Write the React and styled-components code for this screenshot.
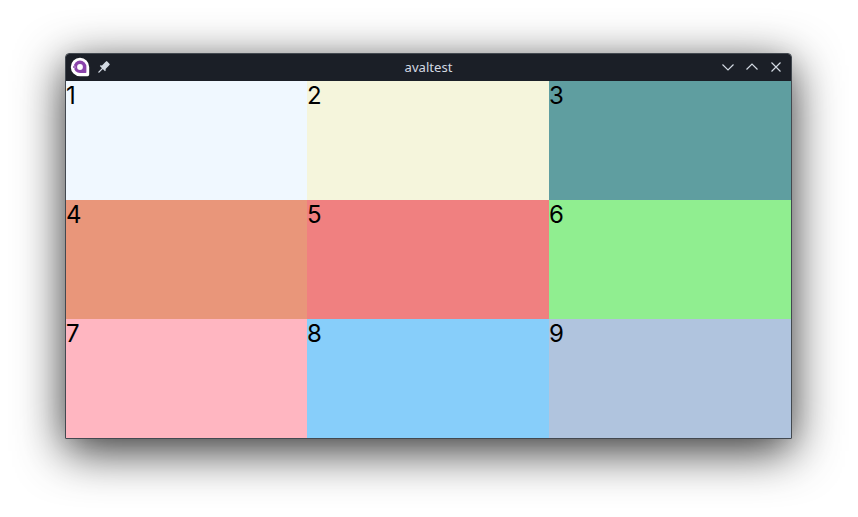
import React from "react";
import styled, { createGlobalStyle } from "styled-components";

const GlobalStyle = createGlobalStyle`
  * { box-sizing: border-box; }
  body { margin: 0; background: #fff; overflow: hidden; }
`;

const Desktop = styled.main`
  width: 858px;
  height: 517px;
  padding: 53px 66px 78px 65px;
`;

const Window = styled.section`
  display: flex;
  flex-direction: column;
  width: 727px;
  height: 386px;
  border: 1px solid #434950;
  border-radius: 4px 4px 0 0;
  box-shadow: 0 12px 48px rgba(0, 0, 0, 0.8), 0 4px 24px rgba(0, 0, 0, 0.05);
`;

const TitleBar = styled.header`
  display: grid;
  grid-template-columns: 72px 1fr 72px;
  align-items: start;
  height: 27px;
  padding: 0 3px 0 4px;
  background: #1b1f27;
  border-radius: 3px 3px 0 0;
`;

const Group = styled.div`
  display: flex;
  align-items: center;
  height: 26px;
`;

const Title = styled.h1`
  margin: 0;
  padding-right: 1px;
  color: #d3dae3;
  font: 400 13.1px/27px "Noto Sans", sans-serif;
  text-align: center;
`;

const TitleButton = styled.button`
  display: flex;
  align-items: center;
  justify-content: center;
  width: 24px;
  height: 24px;
  padding: 0;
  border: 0;
  background: none;
  color: #d3dae3;
`;

const PinButton = styled(TitleButton)`
  margin-left: 2px;
`;

const Grid = styled.div`
  display: grid;
  grid-template-columns: 241px 242px 242px;
  grid-template-rows: repeat(3, 119px);
`;

const Cell = styled.div`
  background: ${({ $color }) => $color};
  color: #000;
  font: 370 24px/30px Inter, sans-serif;
`;

const cells = [
  "aliceblue",
  "beige",
  "cadetblue",
  "darksalmon",
  "lightcoral",
  "lightgreen",
  "lightpink",
  "lightskyblue",
  "lightsteelblue",
];

const AppLogo = () => (
  <svg width="20" height="20" viewBox="0 0 20 20">
    <path d="M10 .8A9.2 9.2 0 1 0 10 19.2H17.5A1.7 1.7 0 0 0 19.2 17.5V10A9.2 9.2 0 0 0 10 .8Z" fill="#fff" />
    <path d="M10 3.6a6.4 6.4 0 0 1 6.4 6.4v5.2a.8.8 0 0 1-.8.8H10A6.2 6.2 0 0 1 10 3.6Z" fill="#8a44ab" />
    <circle cx="10" cy="10" r="2.9" fill="#fff" />
    <circle cx="3.9" cy="10" r="1.5" fill="#fff" />
    <circle cx="4" cy="10" r="1" fill="#8a44ab" />
  </svg>
);

const PinIcon = () => (
  <svg width="14" height="14" viewBox="0 0 14 14">
    <path d="M9.8 1.1 12.9 4.2 12 5.6 8.6 9 8.7 10.5 8 11.2 2.8 6 3.5 5.3 5 5.4 8.4 2Z" fill="currentColor" />
    <path d="M6 8 1.5 12.5" stroke="currentColor" strokeWidth="1.1" />
  </svg>
);

const ControlIcon = ({ path }) => (
  <svg width="18" height="18" viewBox="0 0 18 18" fill="none" stroke="currentColor" strokeWidth="1.15">
    <path d={path} />
  </svg>
);

const controls = [
  ["Minimize", "M3.5 6.5 9 12l5.5-5.5"],
  ["Maximize", "M3.5 11.5 9 6l5.5 5.5"],
  ["Close", "M4.5 4.5l9 9m0-9-9 9"],
];

export default function App() {
  return (
    <Desktop>
      <GlobalStyle />
      <Window>
        <TitleBar>
          <Group>
            <AppLogo />
            <PinButton aria-label="Keep on top"><PinIcon /></PinButton>
          </Group>
          <Title>avaltest</Title>
          <Group>
            {controls.map(([label, path]) => (
              <TitleButton key={label} aria-label={label}><ControlIcon path={path} /></TitleButton>
            ))}
          </Group>
        </TitleBar>
        <Grid>
          {cells.map((color, index) => (
            <Cell key={color} $color={color}>{index + 1}</Cell>
          ))}
        </Grid>
      </Window>
    </Desktop>
  );
}
